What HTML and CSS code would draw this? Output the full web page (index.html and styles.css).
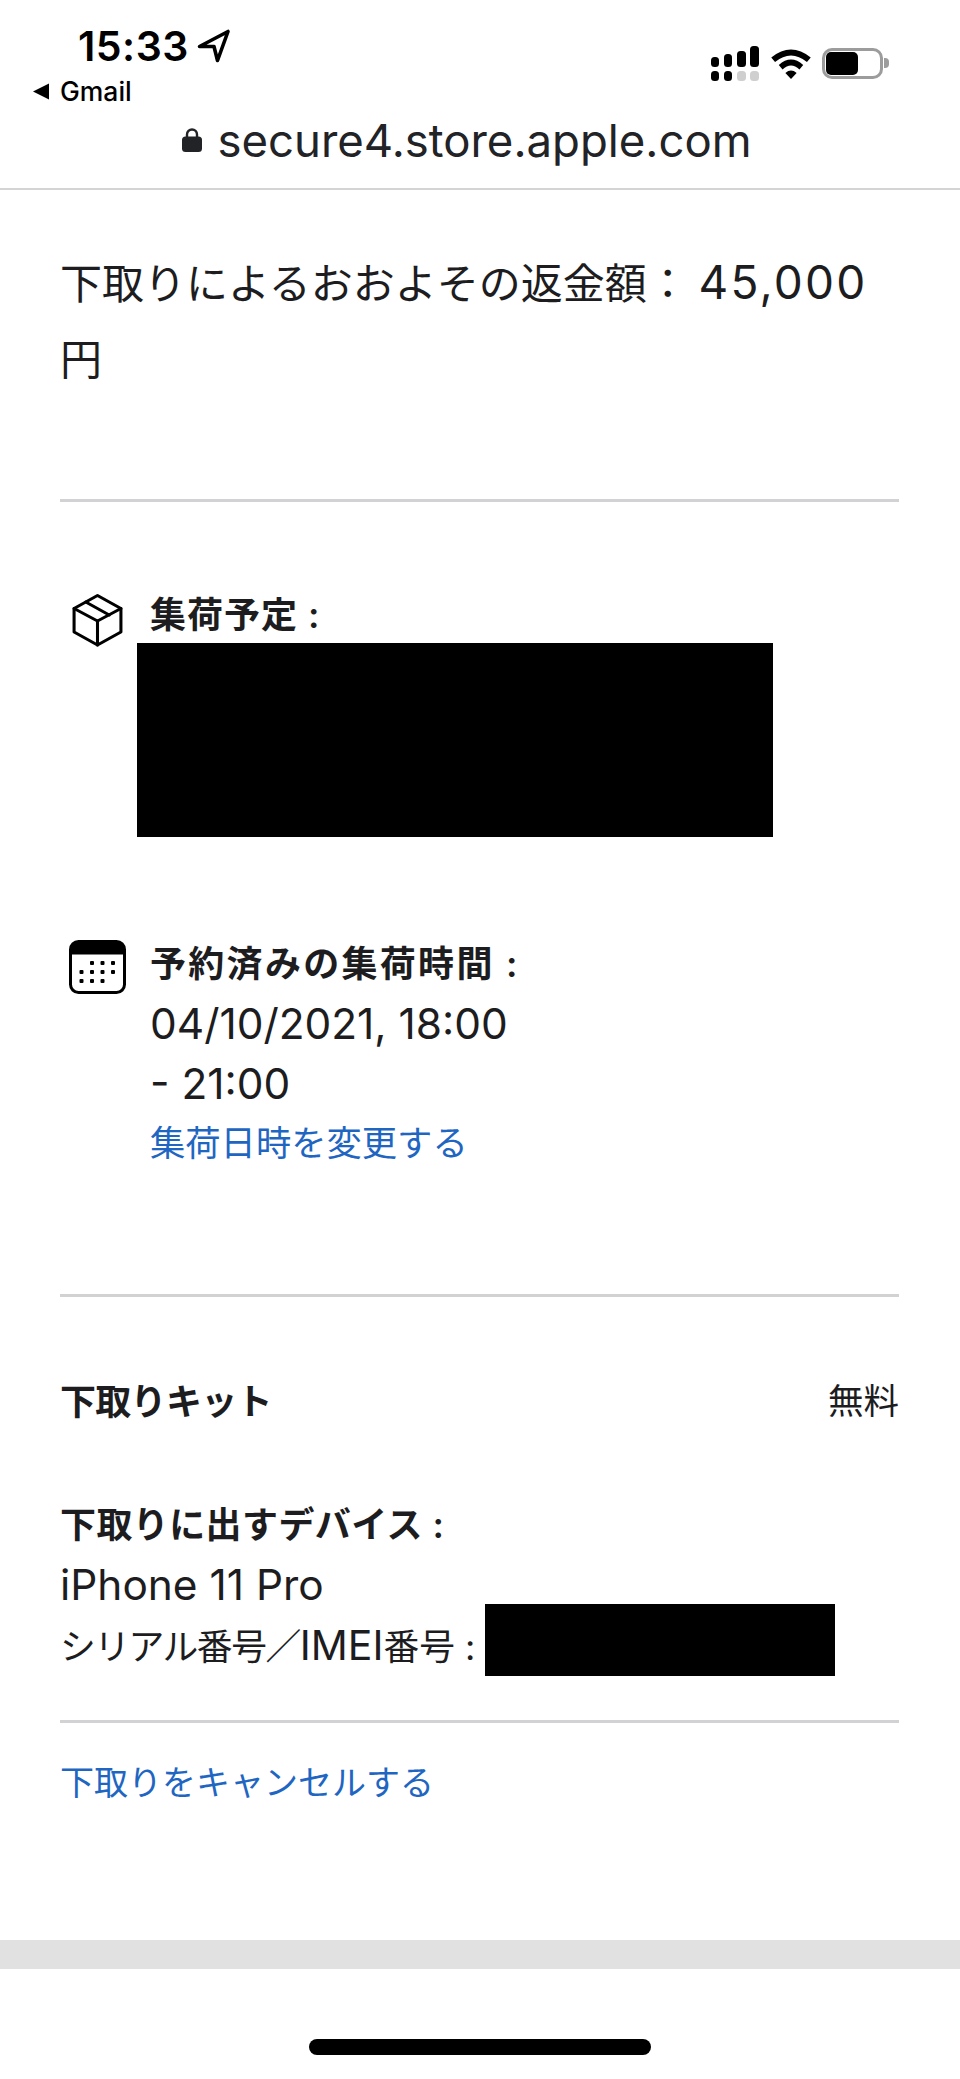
FILE: index.html
```html
<!DOCTYPE html>
<html lang="ja">
<head>
<meta charset="utf-8">
<title>下取り</title>
<link rel="stylesheet" href="styles.css">
</head>
<body>
<header class="top">
  <div class="status">
    <div class="status-left">
      <div class="time-row">
        <span class="time">15:33</span>
        <svg class="loc" width="34" height="34" viewBox="0 0 34 34"><path d="M2.500 17.500 L31 2.500 L20.500 31.500 L17 17.500 Z" fill="none" stroke="#000" stroke-width="3.600" stroke-linejoin="round"/></svg>
      </div>
      <div class="back-row">
        <svg width="18" height="17" viewBox="0 0 18 17"><path d="M1 8.500 L17 0.500 V16.500 Z" fill="#000"/></svg>
        <span class="back">Gmail</span>
      </div>
    </div>
    <div class="status-right">
      <svg width="48" height="35" viewBox="0 0 48 35">
        <rect x="0" y="11" width="8" height="10" rx="3.500" fill="#000"/>
        <rect x="13" y="8" width="8" height="13" rx="3.500" fill="#000"/>
        <rect x="26" y="5" width="9" height="16" rx="3.500" fill="#000"/>
        <rect x="39" y="0" width="9" height="21" rx="3.500" fill="#000"/>
        <rect x="0" y="25" width="8" height="10" rx="3.500" fill="#000"/>
        <rect x="13" y="25" width="8" height="10" rx="3.500" fill="#000"/>
        <rect x="26" y="25" width="9" height="10" rx="3.500" fill="#cfcfcf"/>
        <rect x="39" y="25" width="9" height="10" rx="3.500" fill="#cfcfcf"/>
      </svg>
      <svg class="wifi" width="42" height="31" viewBox="0 0 42 33">
        <path d="M0 10 Q21 -7 42 10 L38 15 Q21 1 4 15 Z" fill="#000"/>
        <path d="M8 18 Q21 6.500 34 18 L30 23 Q21 14.500 12 23 Z" fill="#000"/>
        <path d="M15 26.500 Q21 21.500 27 26.500 L21 33 Z" fill="#000"/>
      </svg>
      <div class="battery"><div class="battery-fill"></div></div>
      <div class="battery-cap"></div>
    </div>
  </div>
  <div class="address">
    <svg width="20" height="24" viewBox="0 0 20 24"><path d="M5 10 V6.500 a5 5 0 0 1 10 0 V10" fill="none" stroke="#222327" stroke-width="2.400"/><rect x="0" y="8.500" width="20" height="15.500" rx="3.500" fill="#222327"/></svg>
    <span class="host">secure4.store.apple.com</span>
  </div>
</header>

<main class="content">
  <h1 class="refund">下取りによるおおよその返金額： <span class="amount">45,000</span> 円</h1>
  <hr class="rule">

  <section class="ship ship-pack">
    <svg class="ship-icon" width="55" height="54" viewBox="0 0 54 54" preserveAspectRatio="none"><g fill="none" stroke="#000" stroke-width="3" stroke-linejoin="round" stroke-linecap="round"><path d="M27 2.500 L50 15.500 V39 L27 52 L4 39 V15.500 Z"/><path d="M4 15.500 L27 28 L50 15.500"/><path d="M27 28 V52"/><path d="M15.500 9 L38.500 22"/></g></svg>
    <div class="ship-body">
      <div class="label">集荷予定 :</div>
      <div class="redact redact-address"></div>
    </div>
  </section>

  <section class="ship ship-time">
    <svg class="ship-icon" width="57" height="54" viewBox="0 0 57 54">
      <rect x="1.500" y="1.500" width="54" height="51" rx="8" fill="#fff" stroke="#000" stroke-width="3"/>
      <path d="M1.500 14 V9.500 a8 8 0 0 1 8 -8 H47.500 a8 8 0 0 1 8 8 V14 Z" fill="#000" stroke="#000"/>
      <g fill="#000">
        <rect x="21" y="21" width="4" height="4" rx="1"/><rect x="31.500" y="21" width="4" height="4" rx="1"/><rect x="42" y="21" width="4" height="4" rx="1"/>
        <rect x="10.500" y="30" width="4" height="4" rx="1"/><rect x="21" y="30" width="4" height="4" rx="1"/><rect x="31.500" y="30" width="4" height="4" rx="1"/><rect x="42" y="30" width="4" height="4" rx="1"/>
        <rect x="10.500" y="39" width="4" height="4" rx="1"/><rect x="21" y="39" width="4" height="4" rx="1"/><rect x="31.500" y="39" width="4" height="4" rx="1"/>
      </g>
    </svg>
    <div class="ship-body">
      <div class="label label-wide">予約済みの集荷時間 :</div>
      <div class="text">04/10/2021, 18:00</div>
      <div class="text">- 21:00</div>
      <a class="link" href="#">集荷日時を変更する</a>
    </div>
  </section>

  <hr class="rule">

  <div class="kit">
    <span class="label label-kit">下取りキット</span>
    <span class="free">無料</span>
  </div>

  <div class="device">
    <div class="label label-device">下取りに出すデバイス :</div>
    <div class="text">iPhone 11 Pro</div>
    <div class="serial"><span><span class="serial-kana">シリアル番号／</span><span class="imei">IMEI</span>番号 :</span><span class="redact redact-serial"></span></div>
  </div>

  <hr class="rule">
  <a class="link cancel" href="#">下取りをキャンセルする</a>
</main>

<div class="band"></div>
<footer class="bottom"><div class="home"></div></footer>
</body>
</html>
```
FILE: styles.css
```css
* { box-sizing: border-box; }
html, body { margin: 0; padding: 0; }
body {
  width: 960px;
  height: 2079px;
  overflow: hidden;
  background: #fff;
  color: #1d1d1f;
  font-family: Inter, "Liberation Sans", "Noto Sans CJK JP", sans-serif;
}
.top { height: 190px; border-bottom: 2px solid #d4d4d4; }
.status { display: flex; justify-content: space-between; height: 118px; }
.status-left { padding: 22px 0 0 32px; }
.time-row { display: flex; align-items: center; gap: 8px; padding-left: 46px; height: 48px; }
.time { font-size: 41px; font-weight: 600; color: #000; letter-spacing: 0.500px; }
.back-row { display: flex; align-items: center; gap: 10px; margin-top: 5px; }
.back { font-size: 26.500px; font-weight: 500; color: #000; }
.status-right { display: flex; align-items: flex-start; gap: 11px; padding: 46px 71px 0 0; }
.wifi { margin-top: 2px; }
.battery { width: 61px; height: 31px; margin: 2px 0 0 -1px; border: 3px solid #9c9c9c; border-radius: 10px; padding: 1px; }
.battery-fill { width: 32px; height: 23px; background: #000; border-radius: 5px; }
.battery-cap { width: 5px; height: 10px; margin: 12px 0 0 -10px; background: #9c9c9c; border-radius: 0 4px 4px 0; }
.address { display: flex; justify-content: center; align-items: center; gap: 15px; height: 44px; padding-right: 26px; }
.host { font-size: 45.500px; color: #222327; }

.content { padding: 0 61px 0 60px; }
.refund { margin: 0; padding-top: 54px; height: 309px; font-size: 42px; line-height: 76px; font-weight: 400; color: #1d1d1f; }
.amount { margin-left: -2px; font-size: 46px; letter-spacing: 2.200px; }
.rule { margin: 0; border: 0; height: 3px; background: #d2d2d5; }
.ship { display: flex; }
.ship-pack { padding-top: 83px; height: 432px; gap: 25px; }
.ship-time { height: 360px; gap: 24px; }
.ship-icon { flex: none; }
.ship-pack .ship-icon { margin: 8px 0 0 10px; }
.ship-time .ship-icon { margin: 6px 0 0 9px; }
.ship-body { flex: 1; }
.label { font-size: 36px; line-height: 60px; font-weight: 600; color: #1d1d1f; letter-spacing: 1px; }
.label-wide { letter-spacing: 2.300px; }
.label-kit { letter-spacing: -0.700px; }
.label-device { letter-spacing: 0.400px; }
.text { font-size: 42.400px; line-height: 60px; color: #1d1d1f; }
.link { display: block; font-size: 35.300px; line-height: 60px; color: #1f66c2; text-decoration: none; }
.redact { display: block; background: #000; }
.redact-address { width: 636px; height: 194px; margin: -2px 0 0 -13px; }
.kit { display: flex; justify-content: space-between; height: 198px; padding-top: 75px; }
.free { font-size: 35.500px; line-height: 60px; }
.device { height: 225px; }
.serial { display: flex; gap: 10px; height: 60px; font-size: 35.800px; line-height: 60px; }
.serial-kana { letter-spacing: -1.500px; }
.imei { font-size: 41px; }
.redact-serial { width: 350px; height: 72px; margin-top: -11px; }
.cancel { margin-top: 30px; font-size: 34px; }
.band { position: absolute; left: 0; top: 1940px; width: 960px; height: 29px; background: #e1e1e1; }
.bottom { position: absolute; left: 0; top: 1969px; width: 960px; height: 110px; }
.home { position: absolute; left: 309px; top: 70px; width: 342px; height: 16px; border-radius: 8px; background: #000; }
```
